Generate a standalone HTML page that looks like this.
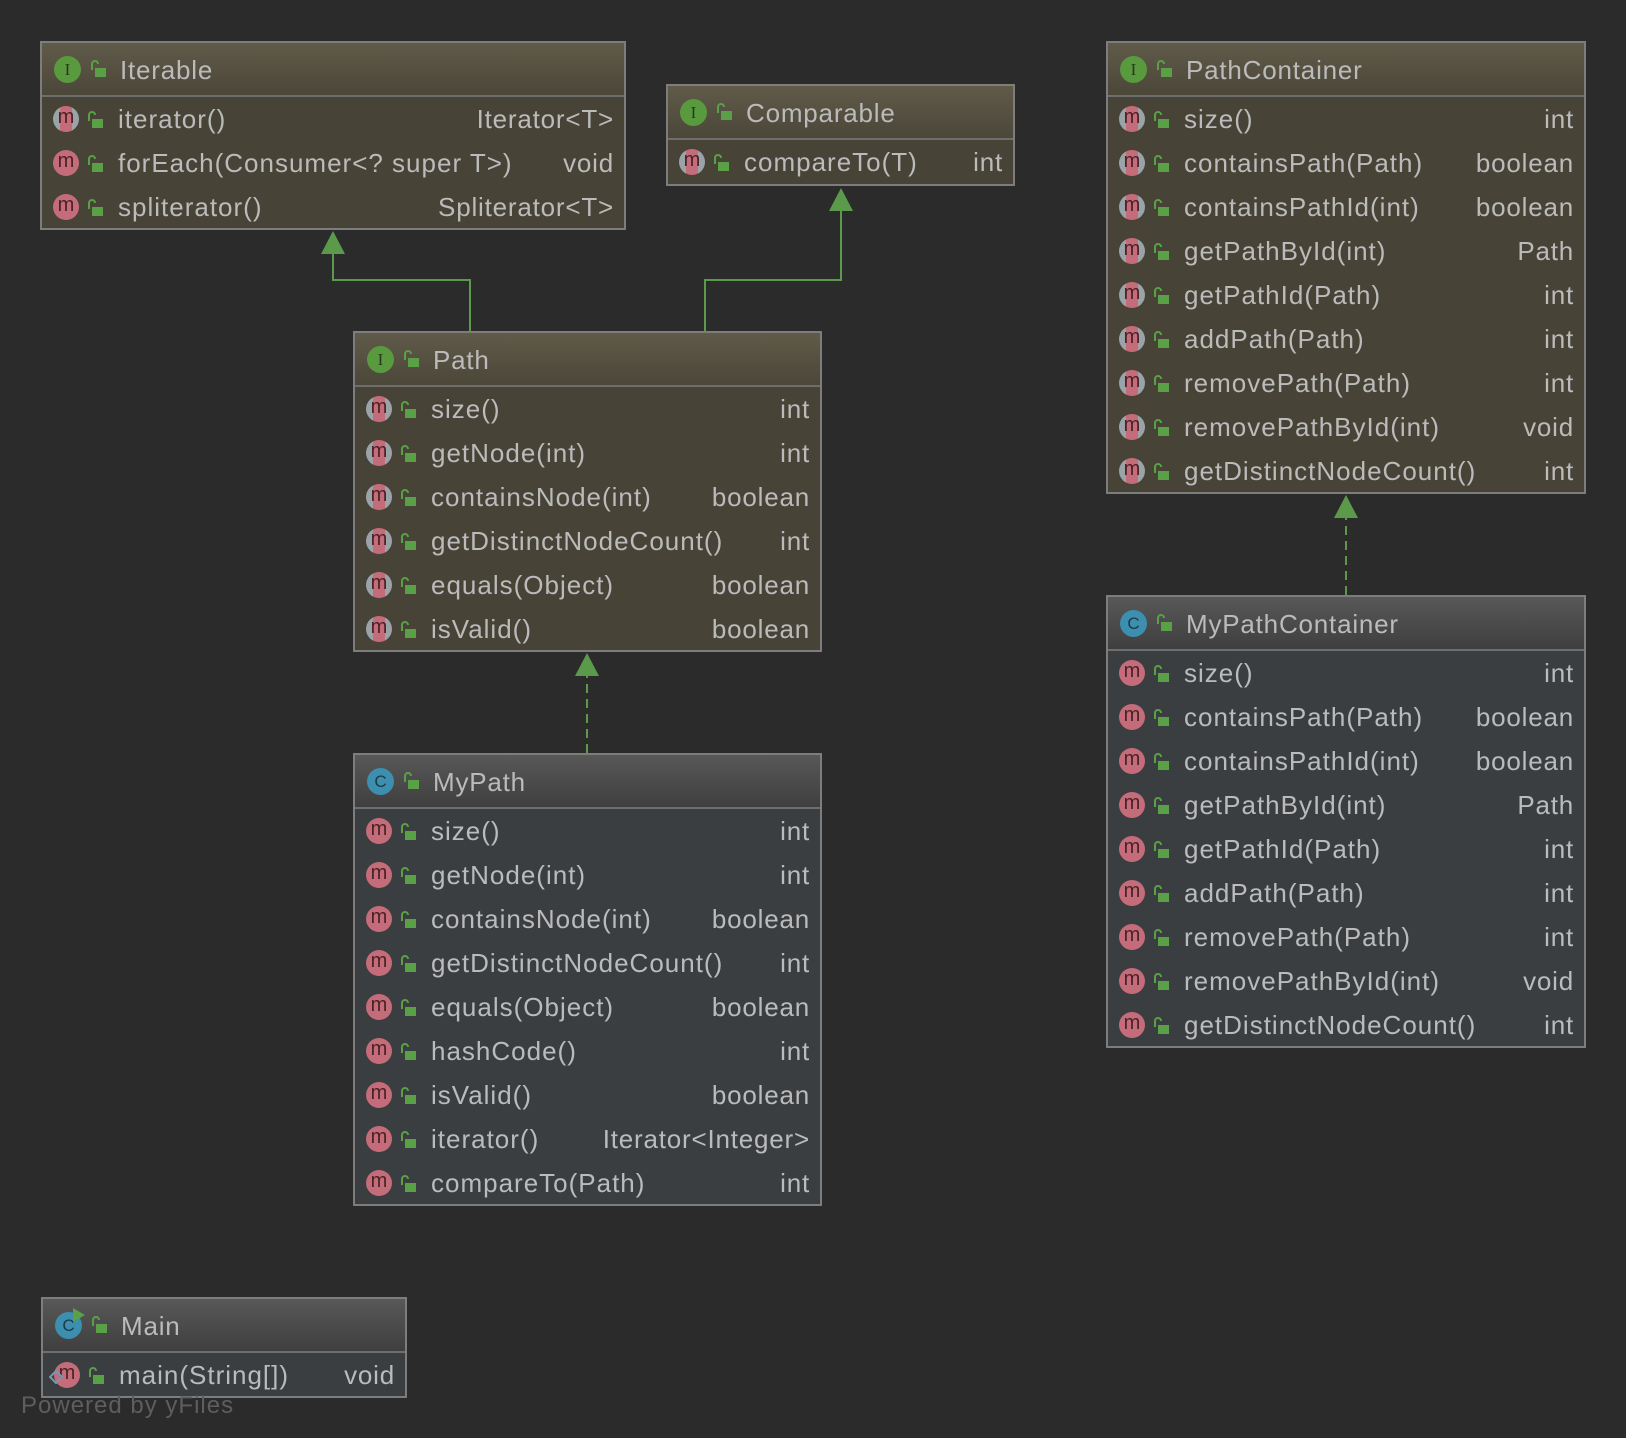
<!DOCTYPE html>
<html><head><meta charset="utf-8"><style>
*{margin:0;padding:0;box-sizing:border-box}
body{width:1626px;height:1438px;background:#2b2b2b;position:relative;overflow:hidden;font-family:"Liberation Sans",sans-serif;color:#bbbbbb}
.b{position:absolute;border:2px solid #7d7d7d}
.i{background:#474337}
.i .h{background:linear-gradient(#605a49,#4b4739)}
.c{background:#3b3e41}
.c .h{background:linear-gradient(#585858,#3f3f3f)}
.h{height:54px;border-bottom:2px solid #6e6e6e;position:relative;font-size:26px;letter-spacing:0.8px}
.h span.n{position:absolute;left:78px;top:12px}
.r{height:44px;position:relative;font-size:26px;letter-spacing:1px}
.r .n{position:absolute;left:76px;top:7px;white-space:nowrap}
.r .t{position:absolute;right:10px;top:7px;white-space:nowrap;letter-spacing:0.8px}
.m{position:absolute;left:11px;top:9px;width:26px;height:26px;border-radius:50%;background:#c46c7a;color:#4a2226;font-size:20px;line-height:23px;text-align:center;letter-spacing:0}
.m.a{background:linear-gradient(to right,#9aa3a8 0 26%,#c46c7a 26% 74%,#9aa3a8 74%)}
.k{position:absolute;left:44px;top:14px;width:18px;height:18px}
.h .k{left:47px;top:17px}
.ci{position:absolute;left:12px;top:13px;width:27px;height:27px;border-radius:50%;font-size:17px;line-height:27px;text-align:center;letter-spacing:0}
.ci.I{background:#5a9a3e;color:#263a1a;font-family:"Liberation Serif",serif}
.ci.C{background:#3c8fae;color:#1b3a48}
</style></head><body>
<svg width="0" height="0" style="position:absolute"><defs>
<g id="lk"><rect x="6" y="8" width="11" height="9" fill="#5aa047"/><path d="M3 10V4a3 3 0 0 1 6 0" fill="none" stroke="#5aa047" stroke-width="2"/></g></defs></svg>

<svg style="position:absolute;left:0;top:0" width="1626" height="1438">
<g stroke="#5a9a4a" stroke-width="2" fill="none">
<path d="M470 331V280H333V240"/>
<path d="M705 331V280H841V205"/>
<path d="M587 753V668" stroke-dasharray="9,6"/>
<path d="M1346 595V510" stroke-dasharray="9,6"/>
</g>
<g fill="#5a9a4a">
<path d="M333 231l-12 23h24z"/>
<path d="M841 188l-12 23h24z"/>
<path d="M587 653l-12 23h24z"/>
<path d="M1346 495l-12 23h24z"/>
</g>
</svg>

<div class="b i" style="left:40px;top:41px;width:586px;height:189px">
<div class="h"><div class="ci I">I</div><svg class="k" viewBox="0 0 18 18"><use href="#lk"/></svg><span class="n">Iterable</span></div>
<div class="r"><div class="m a">m</div><svg class="k" viewBox="0 0 18 18"><use href="#lk"/></svg><span class="n">iterator()</span><span class="t">Iterator&lt;T&gt;</span></div>
<div class="r"><div class="m">m</div><svg class="k" viewBox="0 0 18 18"><use href="#lk"/></svg><span class="n">forEach(Consumer&lt;? super T&gt;)</span><span class="t">void</span></div>
<div class="r"><div class="m">m</div><svg class="k" viewBox="0 0 18 18"><use href="#lk"/></svg><span class="n">spliterator()</span><span class="t">Spliterator&lt;T&gt;</span></div>
</div>

<div class="b i" style="left:666px;top:84px;width:349px;height:102px">
<div class="h"><div class="ci I">I</div><svg class="k" viewBox="0 0 18 18"><use href="#lk"/></svg><span class="n">Comparable</span></div>
<div class="r"><div class="m a">m</div><svg class="k" viewBox="0 0 18 18"><use href="#lk"/></svg><span class="n">compareTo(T)</span><span class="t">int</span></div>
</div>

<div class="b i" style="left:1106px;top:41px;width:480px;height:453px">
<div class="h"><div class="ci I">I</div><svg class="k" viewBox="0 0 18 18"><use href="#lk"/></svg><span class="n">PathContainer</span></div>
<div class="r"><div class="m a">m</div><svg class="k" viewBox="0 0 18 18"><use href="#lk"/></svg><span class="n">size()</span><span class="t">int</span></div>
<div class="r"><div class="m a">m</div><svg class="k" viewBox="0 0 18 18"><use href="#lk"/></svg><span class="n">containsPath(Path)</span><span class="t">boolean</span></div>
<div class="r"><div class="m a">m</div><svg class="k" viewBox="0 0 18 18"><use href="#lk"/></svg><span class="n">containsPathId(int)</span><span class="t">boolean</span></div>
<div class="r"><div class="m a">m</div><svg class="k" viewBox="0 0 18 18"><use href="#lk"/></svg><span class="n">getPathById(int)</span><span class="t">Path</span></div>
<div class="r"><div class="m a">m</div><svg class="k" viewBox="0 0 18 18"><use href="#lk"/></svg><span class="n">getPathId(Path)</span><span class="t">int</span></div>
<div class="r"><div class="m a">m</div><svg class="k" viewBox="0 0 18 18"><use href="#lk"/></svg><span class="n">addPath(Path)</span><span class="t">int</span></div>
<div class="r"><div class="m a">m</div><svg class="k" viewBox="0 0 18 18"><use href="#lk"/></svg><span class="n">removePath(Path)</span><span class="t">int</span></div>
<div class="r"><div class="m a">m</div><svg class="k" viewBox="0 0 18 18"><use href="#lk"/></svg><span class="n">removePathById(int)</span><span class="t">void</span></div>
<div class="r"><div class="m a">m</div><svg class="k" viewBox="0 0 18 18"><use href="#lk"/></svg><span class="n">getDistinctNodeCount()</span><span class="t">int</span></div>
</div>

<div class="b i" style="left:353px;top:331px;width:469px;height:321px">
<div class="h"><div class="ci I">I</div><svg class="k" viewBox="0 0 18 18"><use href="#lk"/></svg><span class="n">Path</span></div>
<div class="r"><div class="m a">m</div><svg class="k" viewBox="0 0 18 18"><use href="#lk"/></svg><span class="n">size()</span><span class="t">int</span></div>
<div class="r"><div class="m a">m</div><svg class="k" viewBox="0 0 18 18"><use href="#lk"/></svg><span class="n">getNode(int)</span><span class="t">int</span></div>
<div class="r"><div class="m a">m</div><svg class="k" viewBox="0 0 18 18"><use href="#lk"/></svg><span class="n">containsNode(int)</span><span class="t">boolean</span></div>
<div class="r"><div class="m a">m</div><svg class="k" viewBox="0 0 18 18"><use href="#lk"/></svg><span class="n">getDistinctNodeCount()</span><span class="t">int</span></div>
<div class="r"><div class="m a">m</div><svg class="k" viewBox="0 0 18 18"><use href="#lk"/></svg><span class="n">equals(Object)</span><span class="t">boolean</span></div>
<div class="r"><div class="m a">m</div><svg class="k" viewBox="0 0 18 18"><use href="#lk"/></svg><span class="n">isValid()</span><span class="t">boolean</span></div>
</div>

<div class="b c" style="left:1106px;top:595px;width:480px;height:453px">
<div class="h"><div class="ci C">C</div><svg class="k" viewBox="0 0 18 18"><use href="#lk"/></svg><span class="n">MyPathContainer</span></div>
<div class="r"><div class="m">m</div><svg class="k" viewBox="0 0 18 18"><use href="#lk"/></svg><span class="n">size()</span><span class="t">int</span></div>
<div class="r"><div class="m">m</div><svg class="k" viewBox="0 0 18 18"><use href="#lk"/></svg><span class="n">containsPath(Path)</span><span class="t">boolean</span></div>
<div class="r"><div class="m">m</div><svg class="k" viewBox="0 0 18 18"><use href="#lk"/></svg><span class="n">containsPathId(int)</span><span class="t">boolean</span></div>
<div class="r"><div class="m">m</div><svg class="k" viewBox="0 0 18 18"><use href="#lk"/></svg><span class="n">getPathById(int)</span><span class="t">Path</span></div>
<div class="r"><div class="m">m</div><svg class="k" viewBox="0 0 18 18"><use href="#lk"/></svg><span class="n">getPathId(Path)</span><span class="t">int</span></div>
<div class="r"><div class="m">m</div><svg class="k" viewBox="0 0 18 18"><use href="#lk"/></svg><span class="n">addPath(Path)</span><span class="t">int</span></div>
<div class="r"><div class="m">m</div><svg class="k" viewBox="0 0 18 18"><use href="#lk"/></svg><span class="n">removePath(Path)</span><span class="t">int</span></div>
<div class="r"><div class="m">m</div><svg class="k" viewBox="0 0 18 18"><use href="#lk"/></svg><span class="n">removePathById(int)</span><span class="t">void</span></div>
<div class="r"><div class="m">m</div><svg class="k" viewBox="0 0 18 18"><use href="#lk"/></svg><span class="n">getDistinctNodeCount()</span><span class="t">int</span></div>
</div>

<div class="b c" style="left:353px;top:753px;width:469px;height:453px">
<div class="h"><div class="ci C">C</div><svg class="k" viewBox="0 0 18 18"><use href="#lk"/></svg><span class="n">MyPath</span></div>
<div class="r"><div class="m">m</div><svg class="k" viewBox="0 0 18 18"><use href="#lk"/></svg><span class="n">size()</span><span class="t">int</span></div>
<div class="r"><div class="m">m</div><svg class="k" viewBox="0 0 18 18"><use href="#lk"/></svg><span class="n">getNode(int)</span><span class="t">int</span></div>
<div class="r"><div class="m">m</div><svg class="k" viewBox="0 0 18 18"><use href="#lk"/></svg><span class="n">containsNode(int)</span><span class="t">boolean</span></div>
<div class="r"><div class="m">m</div><svg class="k" viewBox="0 0 18 18"><use href="#lk"/></svg><span class="n">getDistinctNodeCount()</span><span class="t">int</span></div>
<div class="r"><div class="m">m</div><svg class="k" viewBox="0 0 18 18"><use href="#lk"/></svg><span class="n">equals(Object)</span><span class="t">boolean</span></div>
<div class="r"><div class="m">m</div><svg class="k" viewBox="0 0 18 18"><use href="#lk"/></svg><span class="n">hashCode()</span><span class="t">int</span></div>
<div class="r"><div class="m">m</div><svg class="k" viewBox="0 0 18 18"><use href="#lk"/></svg><span class="n">isValid()</span><span class="t">boolean</span></div>
<div class="r"><div class="m">m</div><svg class="k" viewBox="0 0 18 18"><use href="#lk"/></svg><span class="n">iterator()</span><span class="t">Iterator&lt;Integer&gt;</span></div>
<div class="r"><div class="m">m</div><svg class="k" viewBox="0 0 18 18"><use href="#lk"/></svg><span class="n">compareTo(Path)</span><span class="t">int</span></div>
</div>

<div class="b c" style="left:41px;top:1297px;width:366px;height:101px">
<div class="h"><div class="ci C">C</div><svg style="position:absolute;left:30px;top:9px" width="12" height="14"><path d="M0 0L12 7L0 14z" fill="#5aa047"/></svg><svg class="k" viewBox="0 0 18 18"><use href="#lk"/></svg><span class="n">Main</span></div>
<div class="r"><div class="m">m</div><svg class="k" viewBox="0 0 18 18"><use href="#lk"/></svg><span class="n">main(String[])</span><span class="t">void</span></div>
</div>
<svg style="position:absolute;left:49px;top:1370px" width="14" height="14"><path d="M7 1L13 7L7 13L1 7z" fill="none" stroke="#7a97b0" stroke-width="2"/></svg>
<div style="position:absolute;left:21px;top:1392px;font-size:24px;letter-spacing:1px;color:#5e5e5e">Powered by yFiles</div>
</body></html>
